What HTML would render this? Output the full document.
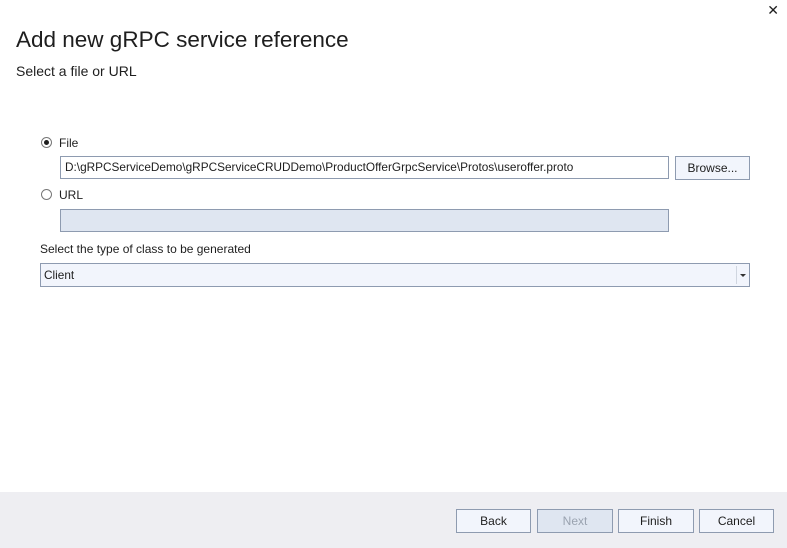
<!DOCTYPE html>
<html><head><style>
body{margin:0;width:787px;height:548px;background:#fff;font-family:"Liberation Sans",sans-serif;position:relative;overflow:hidden;color:#1e1e1e}
.a{position:absolute}
.t{font-size:22.5px;left:16px;top:27px}
.s{font-size:14px;left:16px;top:63px}
.l{font-size:12px}
.box{position:absolute;box-sizing:border-box;border:1px solid #8e9bb0;font-size:11.8px;line-height:21px;padding-left:4px}
.btn{position:absolute;box-sizing:border-box;border:1px solid #8e9bb0;background:#f2f5fc;font-size:12px;text-align:center;line-height:22px}
.radio{position:absolute;width:11px;height:11px;border:1px solid #777;border-radius:50%;box-sizing:border-box;background:#fff}
</style></head><body>
<div class="a" style="right:8px;top:2px;font-size:14px">✕</div>
<div class="a t">Add new gRPC service reference</div>
<div class="a s">Select a file or URL</div>
<div class="radio" style="left:41px;top:137px"><div style="position:absolute;left:2px;top:2px;width:5px;height:5px;border-radius:50%;background:#1e1e1e"></div></div>
<div class="a l" style="left:59px;top:136px">File</div>
<div class="box" style="left:60px;top:156px;width:609px;height:23px;background:#fff">D:\gRPCServiceDemo\gRPCServiceCRUDDemo\ProductOfferGrpcService\Protos\useroffer.proto</div>
<div class="btn" style="left:675px;top:156px;width:75px;height:24px">Browse...</div>
<div class="radio" style="left:41px;top:189px"></div>
<div class="a l" style="left:59px;top:188px">URL</div>
<div class="box" style="left:60px;top:209px;width:609px;height:23px;background:#dfe6f1"></div>
<div class="a l" style="left:40px;top:242px">Select the type of class to be generated</div>
<div class="box" style="left:40px;top:263px;width:710px;height:24px;background:#f2f5fc;line-height:23px;padding-left:3px">Client
<div style="position:absolute;left:695px;top:2px;width:1px;height:18px;background:#d0d6e0"></div>
<div style="position:absolute;left:699px;top:10px;border-left:3px solid transparent;border-right:3px solid transparent;border-top:3px solid #333"></div></div>
<div class="a" style="left:0;top:492px;width:787px;height:56px;background:#eeeef2"></div>
<div class="btn" style="left:456px;top:509px;width:75px;height:24px">Back</div>
<div class="btn" style="left:537px;top:509px;width:76px;height:24px;background:#dfe6f1;color:#9aa3b0">Next</div>
<div class="btn" style="left:618px;top:509px;width:76px;height:24px">Finish</div>
<div class="btn" style="left:699px;top:509px;width:75px;height:24px">Cancel</div>
</body></html>
